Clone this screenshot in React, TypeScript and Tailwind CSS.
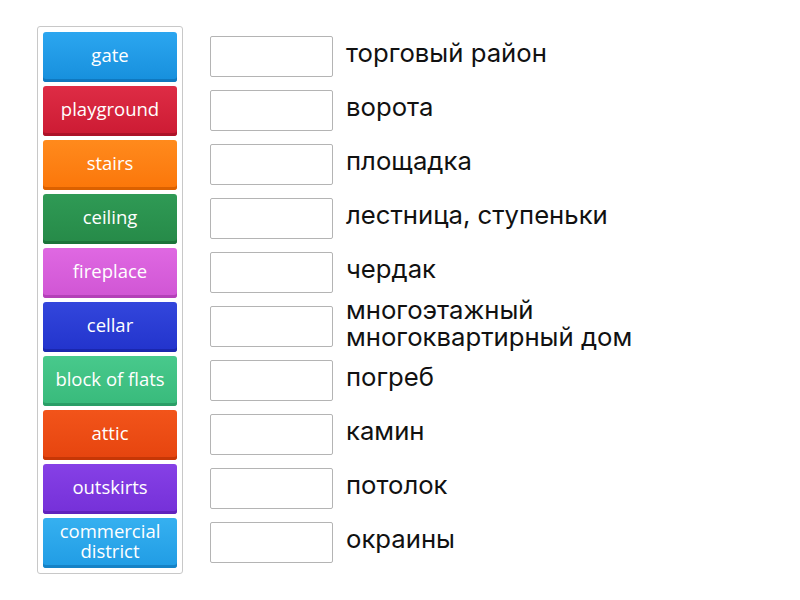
import React from 'react';

interface Tile {
  label: string;
  cls: string;
}

const TILES: Tile[] = [
  { label: 'gate', cls: 'bg-gradient-to-b from-[#2ba6f0] to-[#168fdc] shadow-[inset_0_-3px_0_#0f78bf]' },
  { label: 'playground', cls: 'bg-gradient-to-b from-[#de2c45] to-[#cc1a33] shadow-[inset_0_-3px_0_#ad1228]' },
  { label: 'stairs', cls: 'bg-gradient-to-b from-[#ff8a1c] to-[#fb7608] shadow-[inset_0_-3px_0_#db6100]' },
  { label: 'ceiling', cls: 'bg-gradient-to-b from-[#2f9a55] to-[#268a48] shadow-[inset_0_-3px_0_#1c733a]' },
  { label: 'fireplace', cls: 'bg-gradient-to-b from-[#df68e2] to-[#d055d4] shadow-[inset_0_-3px_0_#b440b8]' },
  { label: 'cellar', cls: 'bg-gradient-to-b from-[#3346dc] to-[#2233cc] shadow-[inset_0_-3px_0_#1a27ae]' },
  { label: 'block of flats', cls: 'bg-gradient-to-b from-[#48c98c] to-[#38ba7b] shadow-[inset_0_-3px_0_#2a9e66]' },
  { label: 'attic', cls: 'bg-gradient-to-b from-[#f2541a] to-[#e6440e] shadow-[inset_0_-3px_0_#c73706]' },
  { label: 'outskirts', cls: 'bg-gradient-to-b from-[#8640e6] to-[#7530d8] shadow-[inset_0_-3px_0_#6022bd]' },
  { label: 'commercial district', cls: 'bg-gradient-to-b from-[#35b0f0] to-[#209ce4] shadow-[inset_0_-3px_0_#1582c6]' },
];

const ANSWERS = [
  'торговый район',
  'ворота',
  'площадка',
  'лестница, ступеньки',
  'чердак',
  'многоэтажный многоквартирный дом',
  'погреб',
  'камин',
  'потолок',
  'окраины',
];

export default function App() {
  return (
    <div className="w-[800px] h-[600px] bg-white flex items-start pl-[37px] pt-[26px]">
      <div className="w-[146px] border border-[#c8c8c8] rounded-[3px] p-[5px] flex flex-col gap-[4px]">
        {TILES.map((tile) => (
          <div
            key={tile.label}
            className={`h-[50px] rounded-[3px] flex items-center justify-center text-center text-white text-[18.5px] leading-[20px] px-1 pb-[5px] font-['Open_Sans',sans-serif] ${tile.cls}`}
          >
            {tile.label}
          </div>
        ))}
      </div>
      <div className="ml-[27px] mt-[10px] flex flex-col gap-[13px]">
        {ANSWERS.map((answer) => (
          <div key={answer} className="h-[41px] flex items-center">
            <div className="w-[123px] h-[41px] border border-[#b4b4b4] rounded-[2px] bg-white shrink-0" />
            <div className="ml-[13px] w-[320px] text-[25.7px] leading-[27px] text-[#111] font-['Inter',sans-serif] -mt-[8px]">
              {answer}
            </div>
          </div>
        ))}
      </div>
    </div>
  );
}
